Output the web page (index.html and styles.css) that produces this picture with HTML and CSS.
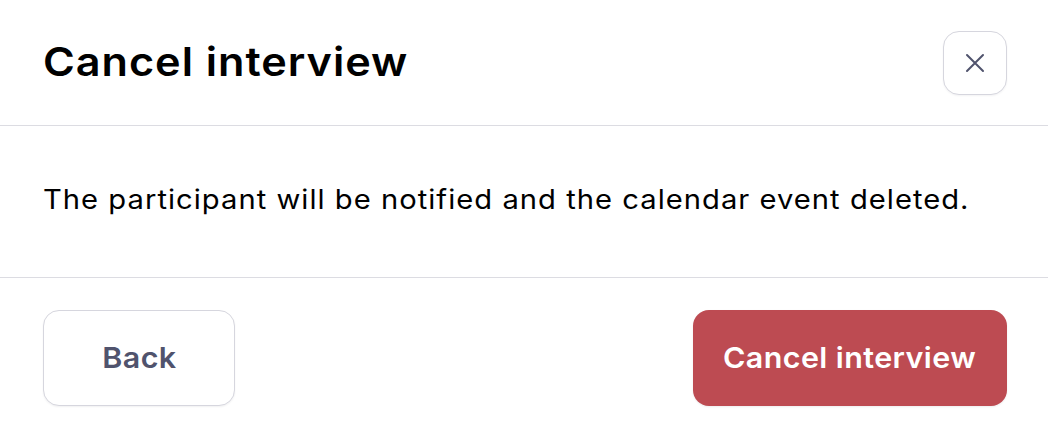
FILE: index.html
```html
<!DOCTYPE html>
<html lang="en">
<head>
<meta charset="utf-8">
<title>Cancel interview</title>
<link rel="stylesheet" href="styles.css">
</head>
<body>
<div class="dialog">
  <header class="dialog-header">
    <h2 class="dialog-title">Cancel interview</h2>
    <button class="close-btn" aria-label="Close">
      <svg width="22" height="22" viewBox="0 0 22 22" fill="none" stroke="currentColor" stroke-width="2" stroke-linecap="round"><path d="M3 3L19 19M19 3L3 19"/></svg>
    </button>
  </header>
  <section class="dialog-body">
    <p class="dialog-text">The participant will be notified and the calendar event deleted.</p>
  </section>
  <footer class="dialog-footer">
    <button class="btn btn-secondary"><span class="btn-label">Back</span></button>
    <button class="btn btn-danger"><span class="btn-label">Cancel interview</span></button>
  </footer>
</div>
</body>
</html>
```
FILE: styles.css
```css
* { box-sizing: border-box; }
html, body { margin: 0; padding: 0; background: #fff; }
body {
  font-family: Inter, "Noto Sans", sans-serif;
  color: #000;
}
.dialog { width: 1048px; height: 434px; display: flex; flex-direction: column; }
.dialog-header {
  height: 126px;
  padding: 0 41px 0 43px;
  display: flex;
  align-items: center;
  justify-content: space-between;
  border-bottom: 1px solid #dcdce2;
}
.dialog-title {
  margin: 0 0 2px;
  font-size: 40px;
  font-weight: 600;
  letter-spacing: 0.9px;
  transform: scaleX(1.08);
  transform-origin: left center;
}
.close-btn {
  width: 64px; height: 64px;
  border: 1.5px solid #d6d6de;
  border-radius: 16px;
  background: #fff;
  color: #50536d;
  display: flex; align-items: center; justify-content: center;
  box-shadow: 0 1px 2px rgba(20, 20, 40, 0.05);
  padding: 0;
}
.dialog-body {
  height: 152px;
  padding: 0 43px 4px;
  display: flex;
  align-items: center;
  border-bottom: 1px solid #dcdce2;
}
.dialog-text {
  margin: 0;
  font-size: 27px;
  font-weight: 400;
  line-height: 1.4;
  letter-spacing: 0.95px;
  transform: scaleX(1.08);
  transform-origin: left center;
  white-space: nowrap;
}
.dialog-footer {
  padding: 32px 41px 0 43px;
  display: flex;
  justify-content: space-between;
}
.btn {
  height: 96px;
  border-radius: 16px;
  font-family: Inter, "Noto Sans", sans-serif;
  font-size: 29px;
  font-weight: 600;
  padding: 0 0 2px;
}
.btn-label {
  display: inline-block;
  letter-spacing: 0.4px;
  transform: scaleX(1.05);
}
.btn-secondary {
  width: 192px;
  background: #fff;
  border: 1.5px solid #d6d6de;
  color: #50536d;
  box-shadow: 0 1px 2px rgba(20, 20, 40, 0.06);
}
.btn-danger {
  width: 314px;
  background: #bd4b52;
  border: none;
  color: #fff;
  box-shadow: 0 1px 2px rgba(20, 20, 40, 0.08);
}
```
